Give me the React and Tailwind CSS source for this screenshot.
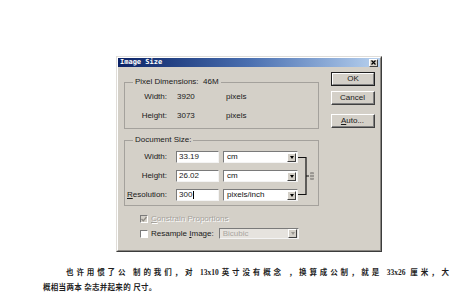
import React from "react";

function Button({ children, primary }) {
  return (
    <div
      className={`flex h-[14px] w-[44px] items-center justify-center bg-[#d4d0c8] text-[8px] leading-none
        ${primary ? "border border-[#202020]" : "border border-t-white border-l-white border-r-[#404040] border-b-[#404040]"}`}
    >
      <div
        className={`flex h-full w-full items-center justify-center
          ${primary ? "border border-t-white border-l-white border-r-[#808080] border-b-[#808080]" : "border-r border-b border-[#808080]"}`}
      >
        {children}
      </div>
    </div>
  );
}

function DropArrow({ disabled }) {
  return (
    <div className="mr-px flex h-[9px] w-[9px] shrink-0 items-center justify-center border border-t-white border-l-white border-r-[#404040] border-b-[#404040] bg-[#d4d0c8]">
      <div
        className={`h-0 w-0 border-x-[2.5px] border-t-[3px] border-x-transparent
          ${disabled ? "border-t-[#9a9791]" : "border-t-black"}`}
      />
    </div>
  );
}

function Select({ value, className, disabled }) {
  return (
    <div
      className={`flex items-center border border-t-[#7a7a7a] border-l-[#7a7a7a] border-r-[#f4f4f4] border-b-[#f4f4f4]
        ${disabled ? "bg-[#e6e3de] text-[#a9a6a0]" : "bg-white text-[#111]"} ${className}`}
    >
      <span className="flex-1 pl-[3px] text-[8px] leading-none">{value}</span>
      <DropArrow disabled={disabled} />
    </div>
  );
}

function Input({ value, caret }) {
  return (
    <div className="flex h-[12px] w-[43px] items-center border border-t-[#7a7a7a] border-l-[#7a7a7a] border-r-[#f4f4f4] border-b-[#f4f4f4] bg-white pl-[2px] text-[8px] leading-none">
      {value}
      {caret && <span className="ml-px inline-block h-[8px] w-px bg-black" />}
    </div>
  );
}

function Checkbox({ checked }) {
  return (
    <div
      className={`flex h-[8px] w-[8px] shrink-0 items-center justify-center border border-t-[#7a7a7a] border-l-[#7a7a7a] border-r-white border-b-white
        ${checked ? "bg-[#d4d0c8]" : "bg-white"}`}
    >
      {checked && (
        <svg width="6" height="6" viewBox="0 0 6 6">
          <path d="M0.5 3 L2.3 4.8 L5.5 1" fill="none" stroke="#8c8983" strokeWidth="1.3" />
        </svg>
      )}
    </div>
  );
}

const pixelRows = [
  { label: "Width:", value: "3920" },
  { label: "Height:", value: "3073" },
];

const docRows = [
  { label: "Width:", value: "33.19", unit: "cm" },
  { label: "Height:", value: "26.02", unit: "cm" },
  { label: "Resolution:", value: "300", unit: "pixels/inch", caret: true },
];

export default function App() {
  return (
    <div className="h-[300px] w-[450px] overflow-hidden bg-white font-['Liberation_Sans',Arial,sans-serif]">
      {/* dialog */}
      <div className="ml-[116px] mt-[56px] h-[196px] w-[266px] border border-t-[#e0ddd8] border-l-[#e0ddd8] border-r-[#3c3c3c] border-b-[#3c3c3c] bg-[#d4d0c8]">
        <div className="flex h-full flex-col border border-t-white border-l-white border-r-[#8a8782] border-b-[#8a8782]">
          {/* title bar */}
          <div className="flex h-[9px] items-center bg-gradient-to-r from-[#0c2266] via-[#4a6fb0] to-[#b9d2ef] pl-[2px] pr-[2px]">
            <span className="font-['DejaVu_Sans_Mono',monospace] text-[7px] font-bold leading-none text-white">
              Image Size
            </span>
            <div className="ml-auto flex h-[8px] w-[9px] items-center justify-center border border-t-white border-l-white border-r-[#404040] border-b-[#404040] bg-[#d4d0c8]">
              <svg width="5" height="5" viewBox="0 0 5 5">
                <path d="M0.5 0.5 L4.5 4.5 M4.5 0.5 L0.5 4.5" stroke="#000" strokeWidth="1.2" />
              </svg>
            </div>
          </div>

          <div className="flex flex-1 text-[#1a1a1a]">
            {/* left column */}
            <div className="w-[202px] pl-[6px] pt-[10px]">
              <fieldset className="w-[195px] border border-[#a4a19c] pb-[6px]">
                <legend className="ml-[8px] px-[2px] text-[8px] leading-[10px]">
                  Pixel Dimensions:&nbsp; 46M
                </legend>
                <div className="mt-[4px] flex flex-col gap-[7px]">
                  {pixelRows.map((row) => (
                    <div key={row.label} className="flex h-[12px] items-center text-[8px] leading-none">
                      <span className="w-[42px] text-right">{row.label}</span>
                      <span className="ml-[10px] w-[49px]">{row.value}</span>
                      <span>pixels</span>
                    </div>
                  ))}
                </div>
              </fieldset>

              <fieldset className="mt-[6px] w-[195px] border border-[#a4a19c] pb-[4px]">
                <legend className="ml-[8px] px-[2px] text-[8px] leading-[10px]">
                  Document Size:
                </legend>
                <div className="mt-[6px] flex">
                  <div className="flex flex-col gap-[7px]">
                    {docRows.map((row) => (
                      <div key={row.label} className="flex h-[12px] items-center text-[8px] leading-none">
                        <span className="w-[42px] text-right">
                          {row.label === "Resolution:" ? (
                            <>
                              <span className="underline">R</span>esolution:
                            </>
                          ) : (
                            row.label
                          )}
                        </span>
                        <div className="ml-[9px]">
                          <Input value={row.value} caret={row.caret} />
                        </div>
                        <Select value={row.unit} className="ml-[4px] h-[12px] w-[75px]" />
                      </div>
                    ))}
                  </div>
                  <svg width="17" height="50" viewBox="0 0 17 50" className="shrink-0">
                    <path d="M0 6.5 H8 V43.5 H0 M8 25 H11" fill="none" stroke="#111" strokeWidth="1.2" />
                    <rect x="12" y="21" width="4" height="8" rx="1" fill="#9a9792" />
                    <path d="M12 23.5 H16 M12 26.5 H16" stroke="#d4d0c8" strokeWidth="0.8" />
                  </svg>
                </div>
              </fieldset>

              <div className="mt-[8px] flex h-[9px] items-center pl-[16px] text-[8px] leading-none">
                <Checkbox checked />
                <span className="ml-[3px] text-[#a5a29c] [text-shadow:1px_1px_0_#fff]">
                  <span className="underline">C</span>onstrain Proportions
                </span>
              </div>

              <div className="mt-[5px] flex h-[11px] w-[175px] items-center pl-[16px] text-[8px] leading-none">
                <Checkbox />
                <span className="ml-[3px] shrink-0">
                  Resample <span className="underline">I</span>mage:
                </span>
                <Select value="Bicubic" disabled className="ml-[5px] h-[11px] min-w-0 flex-1" />
              </div>
            </div>

            {/* right column */}
            <div className="ml-auto flex flex-col gap-[5px] pr-[5px] pt-[5px]">
              <Button primary>OK</Button>
              <Button>Cancel</Button>
              <div className="mt-[4px]">
                <Button>
                  <span className="underline">A</span>uto...
                </Button>
              </div>
            </div>
          </div>
        </div>
      </div>

      {/* caption */}
      <div className="ml-[43px] mt-[13px] w-[406px] font-['Liberation_Serif','Noto_Sans_CJK_SC',serif] text-[7.5px] font-semibold leading-[15px] text-[#1e1e1e]">
        <p className="pl-[23px] text-justify [text-align-last:justify]">
          也许用惯了公 制的我们，对 13x10英寸没有概念 ，换算成公制，就是 33x26 厘米，大
        </p>
        <p className="tracking-[0.3px]">概相当两本 杂志并起来的 尺寸。</p>
      </div>
    </div>
  );
}
